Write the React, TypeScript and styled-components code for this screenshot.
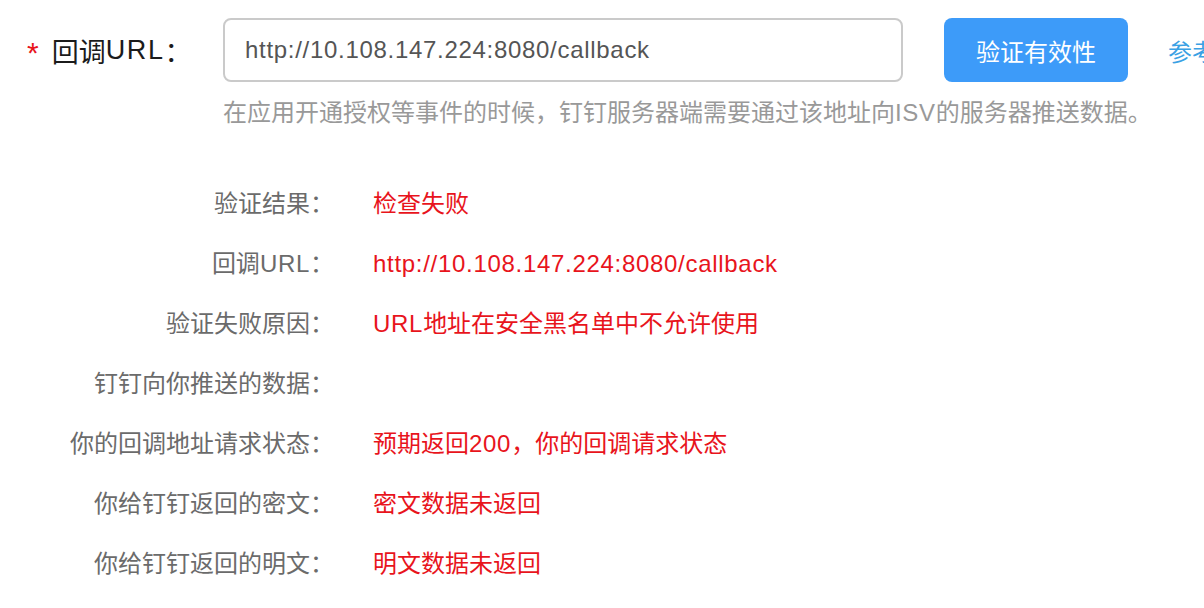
import React from "react";
import styled, { createGlobalStyle } from "styled-components";

const GlobalStyle = createGlobalStyle`
  html, body {
    margin: 0;
    padding: 0;
    background: #ffffff;
    overflow: hidden;
  }
  body {
    font-family: "Liberation Sans", "Noto Sans CJK SC", sans-serif;
  }
`;

const Page = styled.div`
  width: 1204px;
  height: 608px;
  overflow: hidden;
  padding-top: 18px;
  box-sizing: border-box;
`;

const FieldRow = styled.div`
  display: flex;
  align-items: center;
  white-space: nowrap;
  width: 1400px;
`;

const FieldLabel = styled.label`
  flex: 0 0 223px;
  box-sizing: border-box;
  padding-left: 27px;
  display: flex;
  align-items: center;
  font-size: 27px;
  color: #1b1b1b;
`;

const Required = styled.span`
  color: #e8141c;
  font-size: 30px;
  margin-right: 13px;
  position: relative;
  top: 3px;
`;

const Latin = styled.span`
  letter-spacing: 0.7px;
`;

const WideLatin = styled.span`
  letter-spacing: 1.6px;
`;

const UrlInput = styled.input`
  flex: 0 0 680px;
  height: 64px;
  box-sizing: border-box;
  border: 2px solid #cacaca;
  border-radius: 8px;
  padding: 0 20px;
  font-family: "Liberation Sans", "Noto Sans CJK SC", sans-serif;
  font-size: 24px;
  letter-spacing: 0.7px;
  color: #555555;
  outline: none;
  background: #fff;
`;

const PrimaryButton = styled.button`
  flex: 0 0 184px;
  margin-left: 41px;
  height: 64px;
  border: none;
  border-radius: 8px;
  background: #3d9bf9;
  color: #ffffff;
  font-family: "Liberation Sans", "Noto Sans CJK SC", sans-serif;
  font-size: 24px;
  cursor: pointer;
`;

const DocLink = styled.a`
  margin-left: 40px;
  font-size: 24px;
  color: #3aa1e4;
  text-decoration: none;
`;

const Hint = styled.div`
  margin-left: 223px;
  margin-top: 16px;
  font-size: 24px;
  line-height: 30px;
  color: #999999;
  white-space: nowrap;
`;

const Results = styled.div`
  margin-top: 46px;
  display: grid;
  grid-template-columns: 334px 1fr;
  column-gap: 39px;
  grid-auto-rows: 60px;
`;

const ResultLabel = styled.div`
  text-align: right;
  font-size: 24px;
  line-height: 60px;
  color: #6b6b6b;
  white-space: nowrap;
`;

const ResultValue = styled.div`
  font-size: 24px;
  line-height: 60px;
  color: #e8141c;
  white-space: nowrap;
`;

const rows: [React.ReactNode, React.ReactNode][] = [
  ["验证结果：", "检查失败"],
  [
    <>回调<Latin>URL</Latin>：</>,
    <Latin>http://10.108.147.224:8080/callback</Latin>,
  ],
  ["验证失败原因：", <><Latin>URL</Latin>地址在安全黑名单中不允许使用</>],
  ["钉钉向你推送的数据：", ""],
  ["你的回调地址请求状态：", <>预期返回<Latin>200</Latin>，你的回调请求状态</>],
  ["你给钉钉返回的密文：", "密文数据未返回"],
  ["你给钉钉返回的明文：", "明文数据未返回"],
];

export default function App() {
  return (
    <>
      <GlobalStyle />
      <Page>
        <FieldRow>
          <FieldLabel>
            <Required>*</Required>
            回调<WideLatin>URL</WideLatin>：
          </FieldLabel>
          <UrlInput readOnly value="http://10.108.147.224:8080/callback" />
          <PrimaryButton>验证有效性</PrimaryButton>
          <DocLink href="#">参考文档</DocLink>
        </FieldRow>
        <Hint>
          在应用开通授权等事件的时候，钉钉服务器端需要通过该地址向<Latin>ISV</Latin>的服务器推送数据。
        </Hint>
        <Results>
          {rows.map(([label, value], i) => (
            <React.Fragment key={i}>
              <ResultLabel>{label}</ResultLabel>
              <ResultValue>{value}</ResultValue>
            </React.Fragment>
          ))}
        </Results>
      </Page>
    </>
  );
}
